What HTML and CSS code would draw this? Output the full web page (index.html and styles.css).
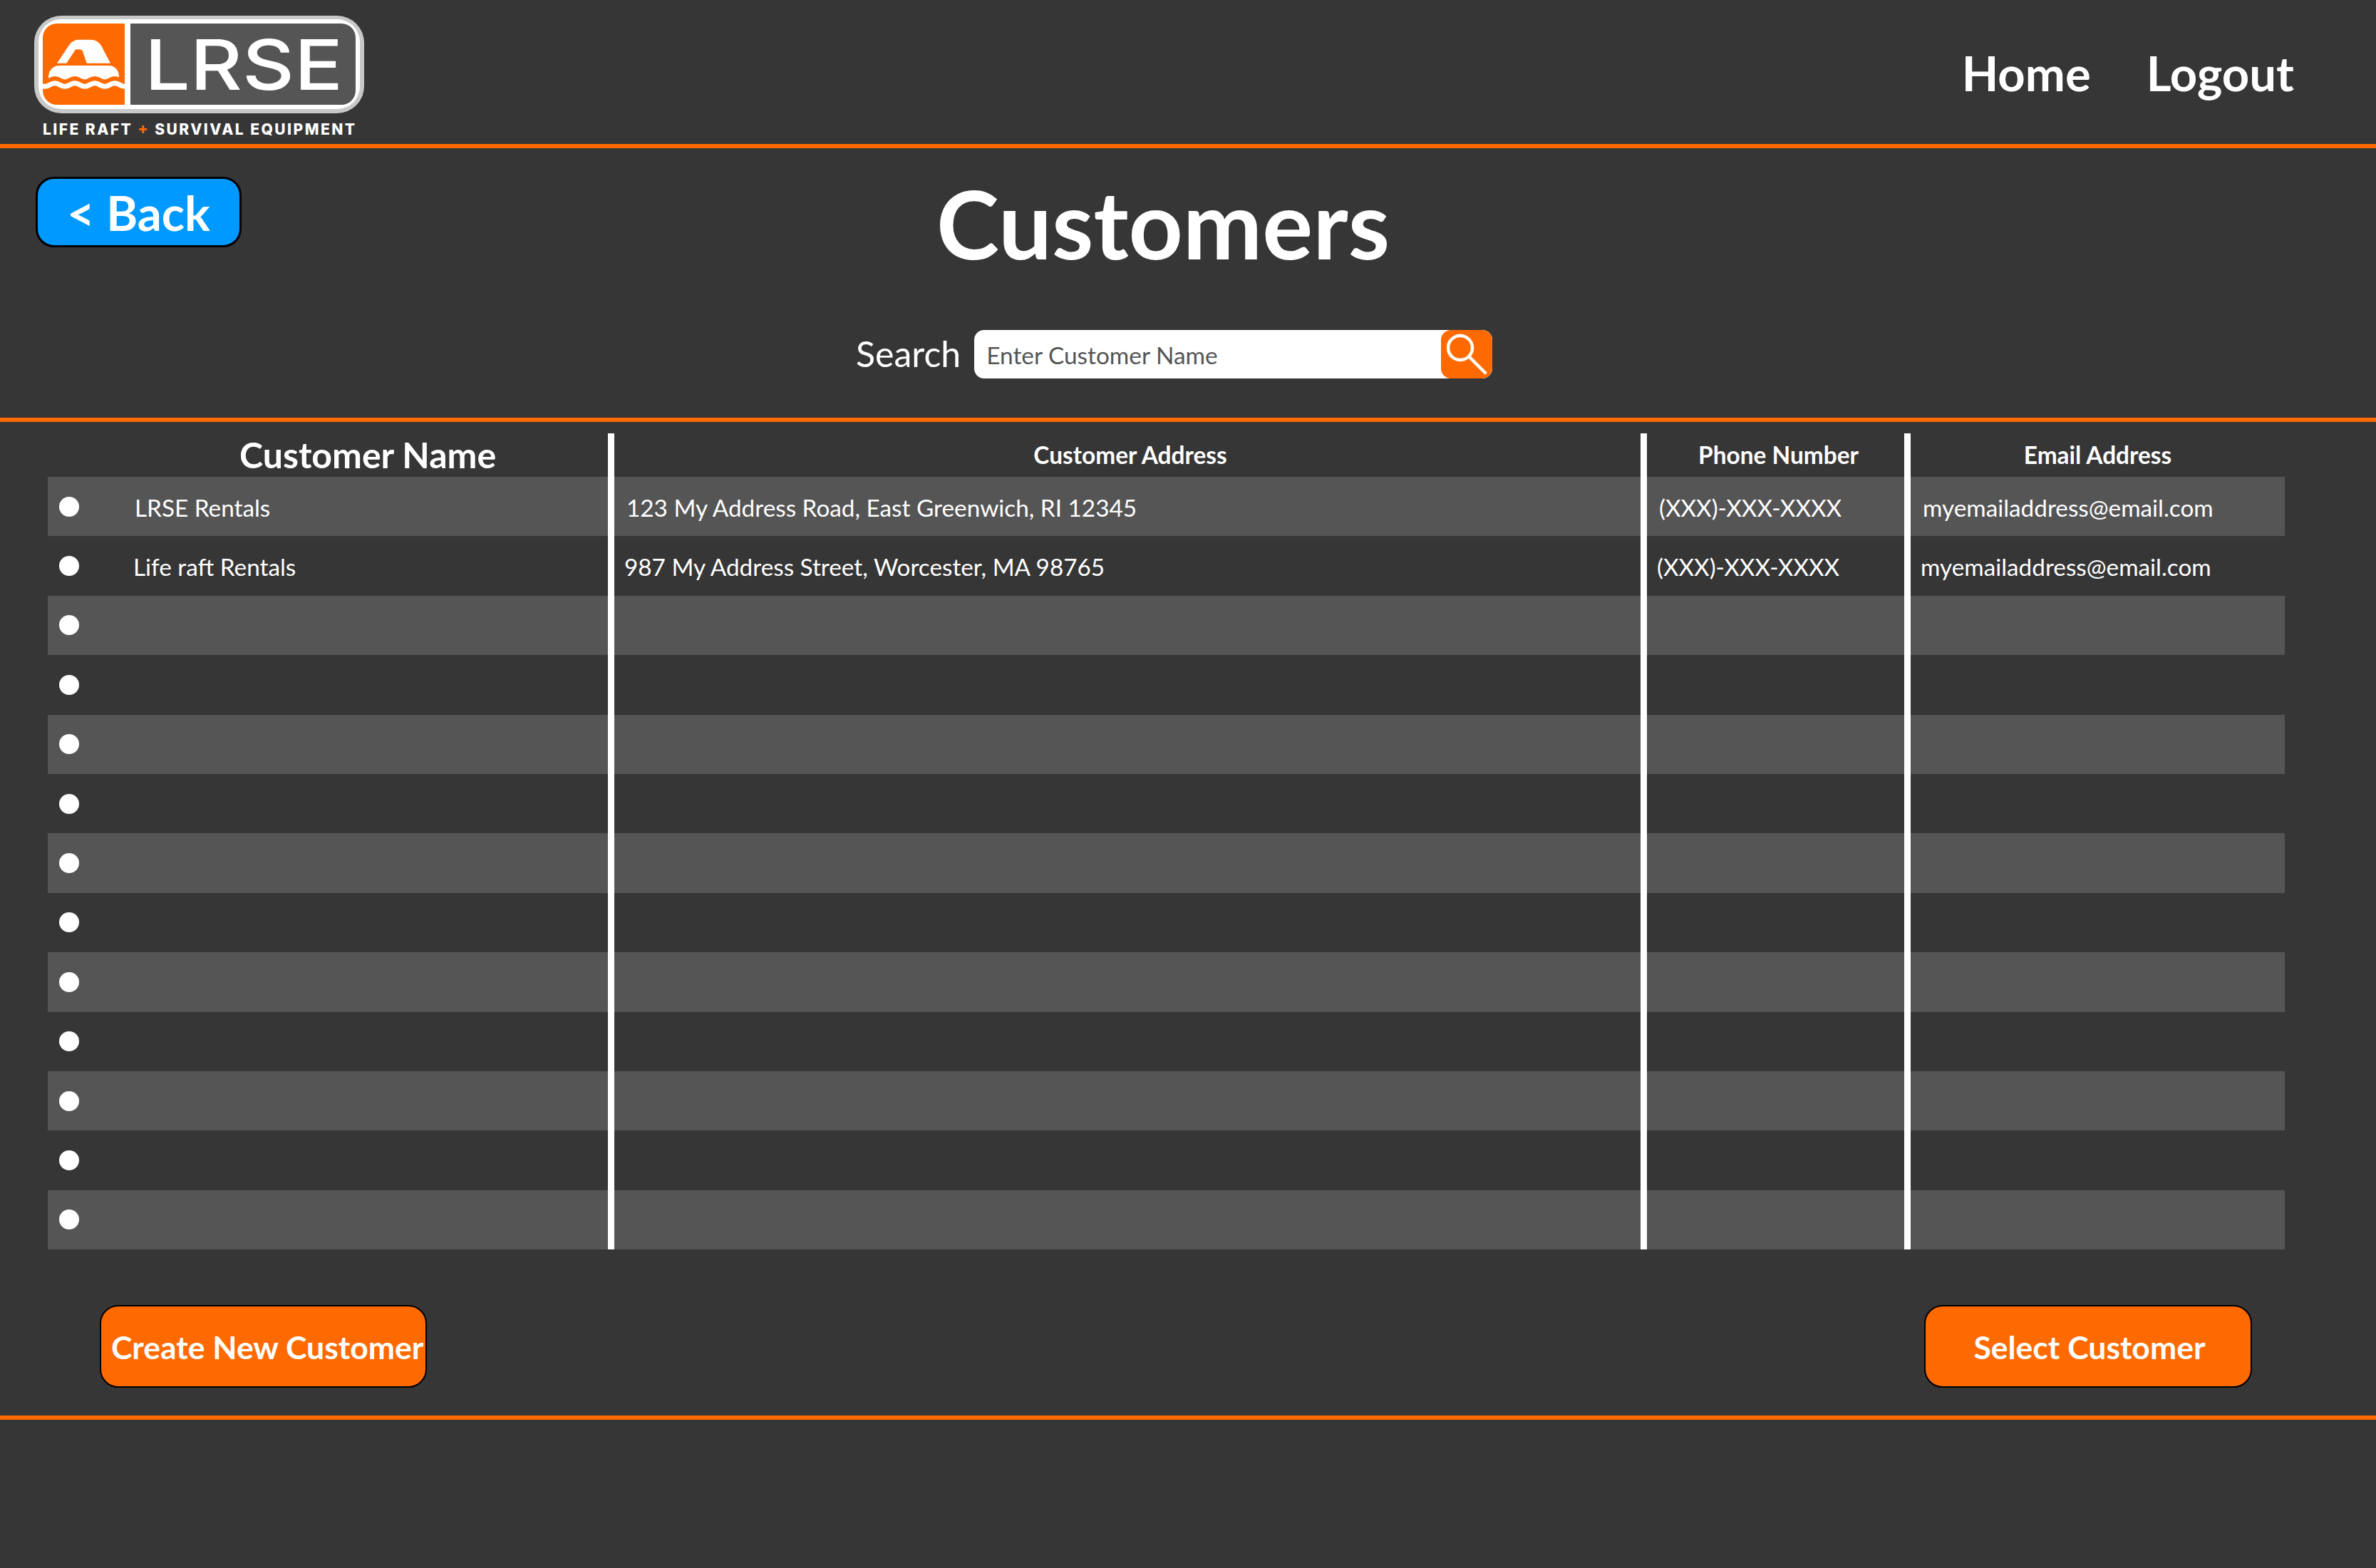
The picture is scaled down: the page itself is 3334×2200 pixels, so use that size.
FILE: index.html
```html
<!DOCTYPE html>
<html lang="en">
<head>
    <meta charset="UTF-8">
    <meta name="viewport" content="width=device-width, initial-scale=1.0">
    <title>Customers</title>
    <link rel="stylesheet" href="styles.css">
</head>
<body>
    <header class="top-bar">
        <svg class="logo" viewBox="48 22 463 172" width="463" height="172">
            <defs>
                <clipPath id="emblemClip">
                    <path d="M80 33H175V147H80A20 20 0 0 1 60 127V53A20 20 0 0 1 80 33Z"/>
                </clipPath>
            </defs>
            <rect x="48" y="22" width="463" height="137" rx="38" fill="#c8c8c8"/>
            <rect x="54" y="27" width="451" height="126" rx="32" fill="#fff"/>
            <path d="M60 53A20 20 0 0 1 80 33H175V147H80A20 20 0 0 1 60 127Z" fill="#ff6a00"/>
            <path d="M183 33H479A20 20 0 0 1 499 53V127A20 20 0 0 1 479 147H183Z" fill="#555"/>
            <path d="M80 88.7L98 61.7C102 57.5 106 55.7 112 55.7H127C134 55.7 139 59 142 64L155 88.7H121.7L116 72C115 70 113.500 69.300 111 69.300H108C106 69.300 105 70.500 104 72.500L93.300 88.700Z" fill="#fff"/>
            <path d="M68 108C68 98 75 92 84 92H152C161 92 167 98 167 108V114H68Z" fill="#fff"/>
            <g clip-path="url(#emblemClip)" fill="none">
                <path d="M56 112.500Q63 117 70 112.500T84 112.500T98 112.500T112 112.500T126 112.500T140 112.500T154 112.500T168 112.500T182 112.500" stroke="#ff6a00" stroke-width="6.500"/>
                <path d="M56 119Q63 123.500 70 119T84 119T98 119T112 119T126 119T140 119T154 119T168 119T182 119" stroke="#fff" stroke-width="7"/>
            </g>
            <text class="logo-word" x="203" y="126" textLength="278" lengthAdjust="spacingAndGlyphs">LRSE</text>
            <text class="logo-tag" x="60" y="189" textLength="438" lengthAdjust="spacing">LIFE RAFT <tspan fill="#ff6a00">+</tspan> SURVIVAL EQUIPMENT</text>
        </svg>
        <nav class="top-nav">
            <a href="#">Home</a>
            <a href="#">Logout</a>
        </nav>
    </header>

    <section class="page-head">
        <div class="title-row">
            <button class="back-btn" type="button">&lt; Back</button>
            <h1>Customers</h1>
        </div>
        <form class="search-row">
            <label for="customerSearch">Search</label>
            <div class="search-box">
                <input id="customerSearch" type="text" placeholder="Enter Customer Name">
                <button class="search-btn" type="button">
                    <svg viewBox="0 0 72 68" width="72" height="68">
                        <circle cx="27" cy="25" r="17" fill="none" stroke="#fff" stroke-width="4.500"/>
                        <path d="M39.500 37.500L62 60" fill="none" stroke="#fff" stroke-width="4.500" stroke-linecap="round"/>
                    </svg>
                </button>
            </div>
        </form>
    </section>

    <section class="customers">
        <div class="row head-row">
            <div class="cell name-head">Customer Name</div>
            <div class="cell">Customer Address</div>
            <div class="cell">Phone Number</div>
            <div class="cell">Email Address</div>
        </div>
        <div class="row">
            <div class="cell"><span class="dot"></span><span class="name">LRSE Rentals</span></div>
            <div class="cell">123 My Address Road, East Greenwich, RI 12345</div>
            <div class="cell">(XXX)-XXX-XXXX</div>
            <div class="cell">myemailaddress@email.com</div>
        </div>
        <div class="row nudged">
            <div class="cell"><span class="dot"></span><span class="name">Life raft Rentals</span></div>
            <div class="cell">987 My Address Street, Worcester, MA 98765</div>
            <div class="cell">(XXX)-XXX-XXXX</div>
            <div class="cell">myemailaddress@email.com</div>
        </div>
        <div class="row"><div class="cell"><span class="dot"></span></div><div class="cell"></div><div class="cell"></div><div class="cell"></div></div>
        <div class="row"><div class="cell"><span class="dot"></span></div><div class="cell"></div><div class="cell"></div><div class="cell"></div></div>
        <div class="row"><div class="cell"><span class="dot"></span></div><div class="cell"></div><div class="cell"></div><div class="cell"></div></div>
        <div class="row"><div class="cell"><span class="dot"></span></div><div class="cell"></div><div class="cell"></div><div class="cell"></div></div>
        <div class="row"><div class="cell"><span class="dot"></span></div><div class="cell"></div><div class="cell"></div><div class="cell"></div></div>
        <div class="row"><div class="cell"><span class="dot"></span></div><div class="cell"></div><div class="cell"></div><div class="cell"></div></div>
        <div class="row"><div class="cell"><span class="dot"></span></div><div class="cell"></div><div class="cell"></div><div class="cell"></div></div>
        <div class="row"><div class="cell"><span class="dot"></span></div><div class="cell"></div><div class="cell"></div><div class="cell"></div></div>
        <div class="row"><div class="cell"><span class="dot"></span></div><div class="cell"></div><div class="cell"></div><div class="cell"></div></div>
        <div class="row"><div class="cell"><span class="dot"></span></div><div class="cell"></div><div class="cell"></div><div class="cell"></div></div>
        <div class="row"><div class="cell"><span class="dot"></span></div><div class="cell"></div><div class="cell"></div><div class="cell"></div></div>
    </section>

    <footer class="actions">
        <button class="action-btn create-btn" type="button">Create New Customer</button>
        <button class="action-btn select-btn" type="button">Select Customer</button>
    </footer>
</body>
</html>
```

FILE: styles.css
```css
* {
    box-sizing: border-box;
}
body {
    margin: 0;
    min-height: 2200px;
    background-color: #363636;
    color: #fff;
    font-family: Lato, "Open Sans", sans-serif;
}
button {
    font-family: inherit;
    color: #fff;
    cursor: pointer;
}

/* top bar */
.top-bar {
    display: flex;
    justify-content: space-between;
    height: 208px;
    padding: 22px 115px 0 48px;
    border-bottom: 6px solid #ff6a00;
}
.logo {
    display: block;
}
.logo-word {
    font-family: Inter, sans-serif;
    font-size: 98px;
    font-weight: 500;
    fill: #fff;
}
.logo-tag {
    font-family: Inter, sans-serif;
    font-size: 21px;
    font-weight: 800;
    fill: #fff;
}
.top-nav {
    display: flex;
    gap: 78px;
    padding-top: 38px;
}
.top-nav a {
    color: #fff;
    font-size: 67px;
    font-weight: 700;
    line-height: 84px;
    text-decoration: none;
}

/* title and search */
.page-head {
    height: 384px;
    padding: 40px 0 0 50px;
    border-bottom: 6px solid #ff6a00;
}
.title-row {
    display: flex;
    align-items: flex-start;
}
.back-btn {
    width: 289px;
    height: 99px;
    padding: 0;
    font-size: 67px;
    font-weight: 700;
    line-height: 86px;
    background-color: #0099ff;
    border: 3px solid #000;
    border-radius: 26px;
}
h1 {
    margin: 0 0 0 975px;
    font-size: 133px;
    font-weight: 700;
    line-height: 130px;
}
.search-row {
    display: flex;
    align-items: center;
    gap: 19px;
    margin: 85px 0 0 1151px;
}
.search-row label {
    margin-top: -3px;
    font-size: 50px;
}
.search-box {
    display: flex;
    width: 727px;
    height: 68px;
    background-color: #fff;
    border-radius: 14px;
    overflow: hidden;
}
.search-box input {
    flex: 1;
    min-width: 0;
    padding: 2px 0 0 17px;
    font-family: inherit;
    font-size: 33.400px;
    border: none;
    background: none;
}
.search-box input::placeholder {
    color: #555;
    opacity: 1;
}
.search-btn {
    display: block;
    width: 72px;
    padding: 0;
    background-color: #ff6a00;
    border: none;
    border-radius: 14px;
}
.search-btn svg {
    display: block;
}

/* customer table */
.customers {
    width: 3139px;
    margin: 16px 0 0 67px;
}
.row {
    display: grid;
    grid-template-columns: 786px 1449px 370px 534px;
    height: 83.4px;
    font-size: 33.300px;
}
.row:nth-child(even) {
    background-color: #555;
}
.cell {
    display: flex;
    align-items: center;
    padding-top: 2px;
    padding-left: 17px;
    border-left: 9px solid #fff;
    white-space: nowrap;
}
.cell:first-child {
    padding-left: 16px;
    border-left: none;
}
.nudged .cell {
    padding-left: 14px;
}
.nudged .cell:first-child {
    padding-left: 16px;
}
.dot {
    width: 28px;
    height: 28px;
    margin-top: -2px;
    margin-right: 78px;
    background-color: #fff;
    border-radius: 50%;
}
.nudged .dot {
    margin-right: 76px;
}
.head-row {
    height: 61px;
    font-size: 33.400px;
    font-weight: 700;
}
.head-row .cell {
    justify-content: center;
    padding: 0 0 3px;
}
.head-row .cell:nth-child(2),
.head-row .cell:nth-child(3) {
    padding-left: 8px;
}
.head-row .name-head {
    justify-content: flex-start;
    padding-left: 269px;
    font-size: 50px;
}

/* bottom buttons */
.actions {
    display: flex;
    justify-content: space-between;
    height: 239px;
    padding: 78px 174px 0 140px;
    border-bottom: 6px solid #ff6a00;
}
.action-btn {
    height: 116px;
    padding: 0;
    font-size: 44.500px;
    font-weight: 700;
    background-color: #ff6a00;
    border: 2px solid #000;
    border-radius: 26px;
}
.create-btn {
    width: 459px;
    padding-left: 14px;
    text-align: left;
    white-space: nowrap;
}
.select-btn {
    width: 460px;
    padding-left: 4px;
}
```
